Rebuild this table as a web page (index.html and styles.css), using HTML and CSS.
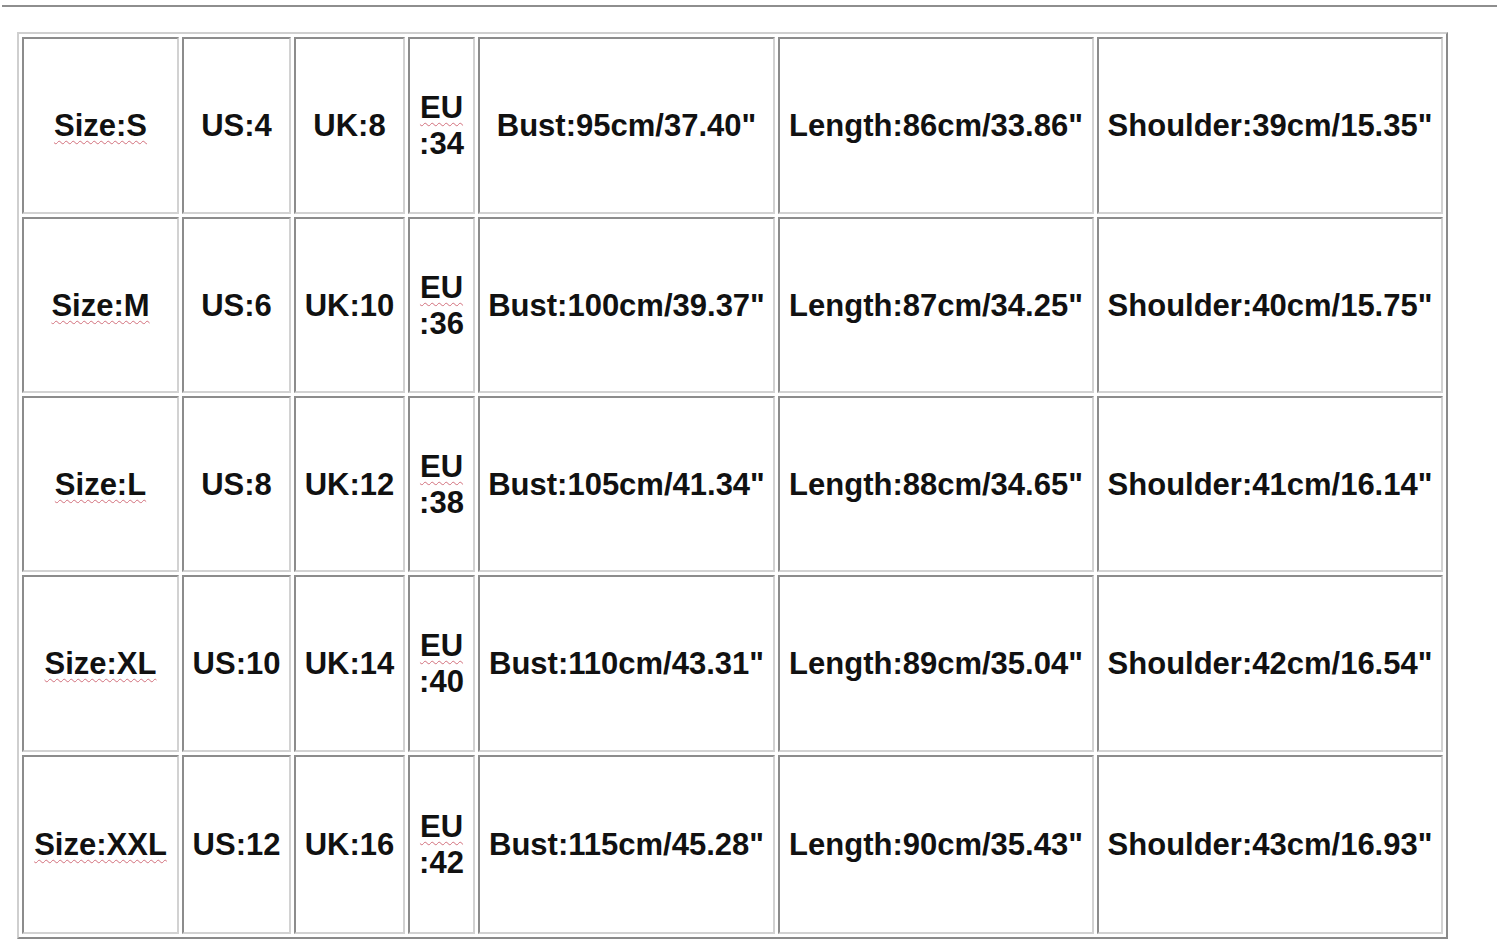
FILE: index.html
```html
<!DOCTYPE html>
<html>
<head>
<meta charset="utf-8">
<link rel="stylesheet" href="styles.css">
</head>
<body>
<div class="rule"></div>
<div class="chart">
  <div class="cell"><span class="sq">Size:S</span></div>
  <div class="cell">US:4</div>
  <div class="cell">UK:8</div>
  <div class="cell eu"><span class="sq">EU</span><span>:34</span></div>
  <div class="cell">Bust:95cm/37.40"</div>
  <div class="cell">Length:86cm/33.86"</div>
  <div class="cell">Shoulder:39cm/15.35"</div>

  <div class="cell"><span class="sq">Size:M</span></div>
  <div class="cell">US:6</div>
  <div class="cell">UK:10</div>
  <div class="cell eu"><span class="sq">EU</span><span>:36</span></div>
  <div class="cell">Bust:100cm/39.37"</div>
  <div class="cell">Length:87cm/34.25"</div>
  <div class="cell">Shoulder:40cm/15.75"</div>

  <div class="cell"><span class="sq">Size:L</span></div>
  <div class="cell">US:8</div>
  <div class="cell">UK:12</div>
  <div class="cell eu"><span class="sq">EU</span><span>:38</span></div>
  <div class="cell">Bust:105cm/41.34"</div>
  <div class="cell">Length:88cm/34.65"</div>
  <div class="cell">Shoulder:41cm/16.14"</div>

  <div class="cell"><span class="sq">Size:XL</span></div>
  <div class="cell">US:10</div>
  <div class="cell">UK:14</div>
  <div class="cell eu"><span class="sq">EU</span><span>:40</span></div>
  <div class="cell">Bust:110cm/43.31"</div>
  <div class="cell">Length:89cm/35.04"</div>
  <div class="cell">Shoulder:42cm/16.54"</div>

  <div class="cell"><span class="sq">Size:XXL</span></div>
  <div class="cell">US:12</div>
  <div class="cell">UK:16</div>
  <div class="cell eu"><span class="sq">EU</span><span>:42</span></div>
  <div class="cell">Bust:115cm/45.28"</div>
  <div class="cell">Length:90cm/35.43"</div>
  <div class="cell">Shoulder:43cm/16.93"</div>
</div>
</body>
</html>
```
FILE: styles.css
```css
html, body {
  margin: 0;
  padding: 0;
  background: #ffffff;
}
body {
  font-family: "Liberation Sans", Arial, sans-serif;
  color: #111111;
}
.rule {
  margin: 5px 2px 0 2px;
  height: 0;
  border-top: 2px solid #8e8e8e;
}
.chart {
  margin: 25px 0 0 17px;
  width: max-content;
  display: grid;
  grid-template-columns: 157px 109px 111px 67px 297px 316px 346px;
  grid-template-rows: 177px 176px 176px 177px 179px;
  gap: 3px;
  padding: 3px;
  border: 2px solid;
  border-color: #cfcfcf #8a8a8a #8a8a8a #cfcfcf;
}
.cell {
  box-sizing: border-box;
  border: 2px solid;
  border-color: #8c8c8c #d2d2d2 #d2d2d2 #8c8c8c;
  display: flex;
  align-items: center;
  justify-content: center;
  font-size: 31px;
  font-weight: bold;
  white-space: nowrap;
  padding-top: 1px;
}
.eu {
  flex-direction: column;
  line-height: 36px;
}
.sq {
  text-decoration: underline wavy #d2707c;
  text-decoration-thickness: 1px;
  text-underline-offset: 4px;
}
```
